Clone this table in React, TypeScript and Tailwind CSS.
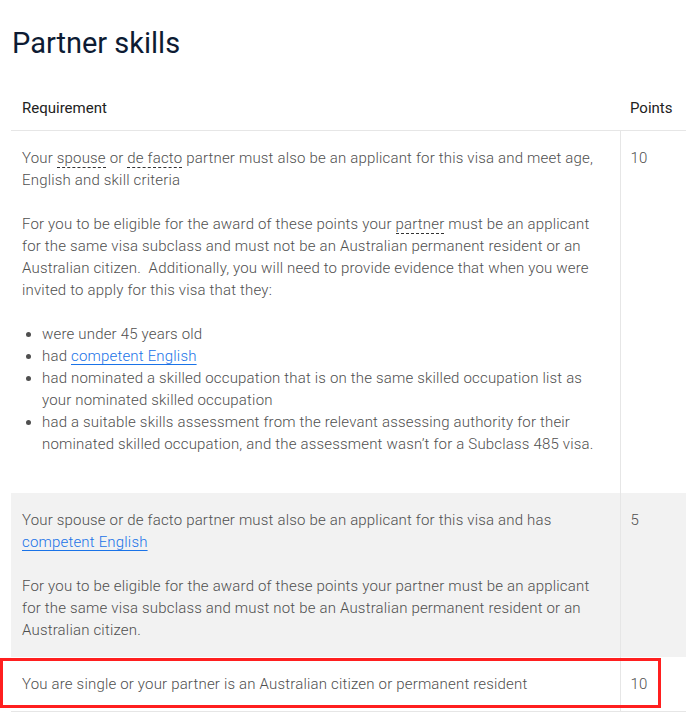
import React from 'react';

const Term: React.FC<{ children: React.ReactNode }> = ({ children }) => (
  <span className="border-b border-dashed border-[#333]">{children}</span>
);

const Link: React.FC<{ children: React.ReactNode }> = ({ children }) => (
  <a href="#" className="text-[#1a73e8] underline decoration-[#1a73e8] underline-offset-[3px]">
    {children}
  </a>
);

const App: React.FC = () => {
  return (
    <div className="w-[696px] min-h-[724px] bg-white px-[11px] font-['Roboto',sans-serif] text-[15px] leading-[22px] font-light text-[#4f4f4f]">
      <h2 className="pt-[25px] pl-px text-[29px] leading-[36px] font-normal text-[#0d1b33]">Partner skills</h2>

      <div className="relative mt-[20px]">
        <table className="w-[675px] border-collapse">
          <thead>
            <tr className="border-b border-[#e6e6e6]">
              <th className="w-[609px] px-[11px] pt-4 pb-[11px] text-left font-normal text-[#222]">Requirement</th>
              <th className="px-[10px] pt-4 pb-[11px] text-left font-normal text-[#222]">Points</th>
            </tr>
          </thead>
          <tbody className="tracking-[0.18px]">
            <tr>
              <td className="px-[11px] pt-4 pb-4 align-top">
                <p>
                  Your <Term>spouse</Term> or <Term>de facto</Term> partner must also be an applicant for this visa and meet age,
                  English and skill criteria
                </p>
                <p className="mt-[22px]">
                  For you to be eligible for the award of these points your <Term>partner</Term> must be an applicant for the
                  same visa subclass and must not be an Australian permanent resident or an Australian citizen.&nbsp;
                  Additionally, you will need to provide evidence that when you were invited to apply for this visa that they:
                </p>
                <ul className="my-[22px] list-disc pl-5">
                  <li>were under 45 years old</li>
                  <li>
                    had <Link>competent English</Link>
                  </li>
                  <li>had nominated a skilled occupation that is on the same skilled occupation list as your nominated skilled occupation</li>
                  <li>
                    had a suitable skills assessment from the relevant assessing authority for their nominated skilled
                    occupation, and the assessment wasn’t for a Subclass 485 visa.
                  </li>
                </ul>
              </td>
              <td className="border-l border-[#e6e6e6] px-[10px] pt-4 align-top">10</td>
            </tr>
            <tr className="bg-[#f2f2f2]">
              <td className="px-[11px] py-4 align-top">
                <p>
                  Your spouse or de facto partner must also be an applicant for this visa and has{' '}
                  <Link>competent English</Link>
                </p>
                <p className="mt-[22px]">
                  For you to be eligible for the award of these points your partner must be an applicant for the same visa
                  subclass and must not be an Australian permanent resident or an Australian citizen.
                </p>
              </td>
              <td className="border-l border-[#e6e6e6] px-[10px] pt-4 align-top">5</td>
            </tr>
            <tr className="border-b border-[#e6e6e6]">
              <td className="px-[11px] py-4 align-top">
                You are single or your partner is an Australian citizen or permanent resident
              </td>
              <td className="border-l border-[#e6e6e6] px-[10px] py-4 align-top">10</td>
            </tr>
          </tbody>
        </table>

        {/* annotation box */}
        <div className="pointer-events-none absolute bottom-[4px] left-[-11px] h-[50px] w-[661px] border-[3px] border-[#ff1f1f]" />
      </div>
    </div>
  );
};

export default App;
